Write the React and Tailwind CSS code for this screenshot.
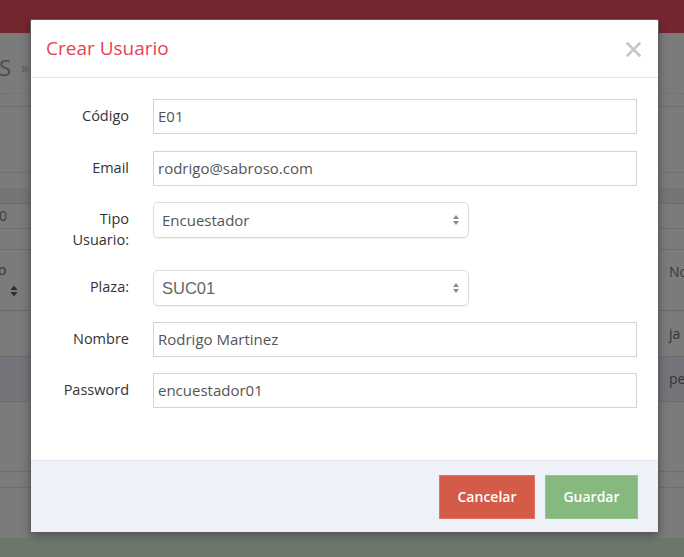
import React from 'react';

const FONT = { fontFamily: '"Open Sans", "Liberation Sans", sans-serif' };

function Band({ className = '', children }) {
  return <div className={`relative w-full ${className}`}>{children}</div>;
}

function SelectArrows() {
  return (
    <svg width="8" height="12" viewBox="0 0 8 12" className="shrink-0">
      <path d="M4 1 L7 5 L1 5 Z" fill="#8a8a8a" />
      <path d="M4 11 L7 7 L1 7 Z" fill="#8a8a8a" />
    </svg>
  );
}

function Field({ label, children, labelClass = '', rowClass = 'mb-[16px]' }) {
  return (
    <div className={`flex items-start ${rowClass}`}>
      <div className={`w-[98px] text-right text-[14.5px] leading-[21px] pt-[6px] text-[#333] ${labelClass}`}>{label}</div>
      <div className="ml-[24px] flex-1">{children}</div>
    </div>
  );
}

function TextInput({ value }) {
  return (
    <div className="h-[35px] border border-[#d4d4d4] flex items-center pl-[4px] text-[15px] text-[#555]">
      {value}
    </div>
  );
}

function Select({ value, arial }) {
  return (
    <div className="w-[316px] h-[36px] border border-[#dcdcdc] rounded-[5px] shadow-[0_1px_1px_rgba(0,0,0,0.06)] flex items-center justify-between pl-[8px] pr-[8px]">
      <span
        className={arial ? 'text-[16.5px] text-[#666]' : 'text-[15px] text-[#555]'}
        style={arial ? { fontFamily: '"Liberation Sans", Arial, sans-serif' } : undefined}
      >
        {value}
      </span>
      <SelectArrows />
    </div>
  );
}

export default function App() {
  return (
    <div className="relative w-[684px] h-[557px] overflow-hidden bg-[#7b7b7b]" style={FONT}>
      {/* page behind the overlay */}
      <Band className="h-[33px] bg-[#76262f]" />
      <Band className="h-[61px] border-b border-dotted border-[#6c6c6c]">
        <span className="absolute left-[-1px] top-[18px] text-[22px] text-[#4a4a4a]">S</span>
        <span className="absolute left-[21px] top-[23px] text-[15px] text-[#5a5a5a]">»</span>
      </Band>
      <Band className="h-[13px] border-b border-[#6c6c6c]" />
      <Band className="h-[66px] border-b border-[#727272]" />
      <Band className="h-[15px]" />
      <Band className="h-[16px] bg-[#757575] border-b border-[#6c6c6c]" />
      <Band className="h-[25px] border-b border-[#6c6c6c]">
        <span className="absolute left-[-1px] top-[1px] text-[14px] text-[#3c3c3c]">0</span>
      </Band>
      <Band className="h-[21px] border-b border-[#6c6c6c]" />
      <Band className="h-[61px] border-b border-[#6a6a6a]">
        <span className="absolute left-[-2px] top-[9px] text-[14px] text-[#333]">o</span>
        <svg width="8" height="12" viewBox="0 0 8 12" className="absolute left-[10px] top-[35px]">
          <path d="M4 0.5 L7.5 5 L0.5 5 Z" fill="#2e2e2e" />
          <path d="M4 11.5 L7.5 7 L0.5 7 Z" fill="#2e2e2e" />
        </svg>
        <span className="absolute left-[669px] top-[11px] text-[14px] text-[#3a3a3a]">No</span>
      </Band>
      <Band className="h-[46px] border-b border-[#6c6c6c]">
        <span className="absolute left-[669px] top-[12px] text-[14px] text-[#333]">ja</span>
      </Band>
      <Band className="h-[45px] bg-[#74757a] border-b border-[#6c6c6c]">
        <span className="absolute left-[669px] top-[11px] text-[14px] text-[#333]">pe</span>
      </Band>
      <Band className="h-[70px] border-b border-[#6e6e6e]" />
      <Band className="h-[16px] border-b border-[#6e6e6e]" />
      <Band className="h-[50px]" />
      <Band className="h-[19px] bg-[#6b786b]" />

      {/* modal */}
      <div className="absolute left-[30px] top-[19px] w-[629px] h-[514px] bg-white rounded-[2px] border border-[#5e5e5e] shadow-[0_3px_9px_rgba(0,0,0,0.35)] flex flex-col overflow-hidden">
        <div className="h-[58px] border-b border-[#e5e5e5] flex items-center justify-between pl-[15px] pr-[17px] shrink-0">
          <h4 className="text-[19px] text-[#e9434f] leading-none mt-[-1px]">Crear Usuario</h4>
          <svg width="15" height="15" viewBox="0 0 15 15" className="mt-[2px]">
            <path d="M1.5 1.5 L13.5 13.5 M13.5 1.5 L1.5 13.5" stroke="#c6c6c6" strokeWidth="2.6" strokeLinecap="square" />
          </svg>
        </div>

        <div className="flex-1 pt-[21px] pr-[21px]">
          <Field label="Código" rowClass="mb-[17px]"><TextInput value="E01" /></Field>
          <Field label="Email"><TextInput value="rodrigo@sabroso.com" /></Field>
          <Field label={<>Tipo<br />Usuario:</>} labelClass="pb-[4px]"><Select value="Encuestador" /></Field>
          <Field label="Plaza:"><Select value="SUC01" arial /></Field>
          <Field label="Nombre"><TextInput value="Rodrigo Martinez" /></Field>
          <Field label="Password"><TextInput value="encuestador01" /></Field>
        </div>

        <div className="h-[72px] shrink-0 bg-[#eef2f8] border-t border-[#e4e8ee] flex items-center justify-end gap-[10px] pr-[20px]">
          <button className="w-[96px] h-[44px] bg-[#d35b47] border border-[#dd7564] text-white text-[14px] font-semibold">
            Cancelar
          </button>
          <button className="w-[93px] h-[44px] bg-[#86b97e] border border-[#97c590] text-white text-[14px] font-semibold">
            Guardar
          </button>
        </div>
      </div>
    </div>
  );
}
